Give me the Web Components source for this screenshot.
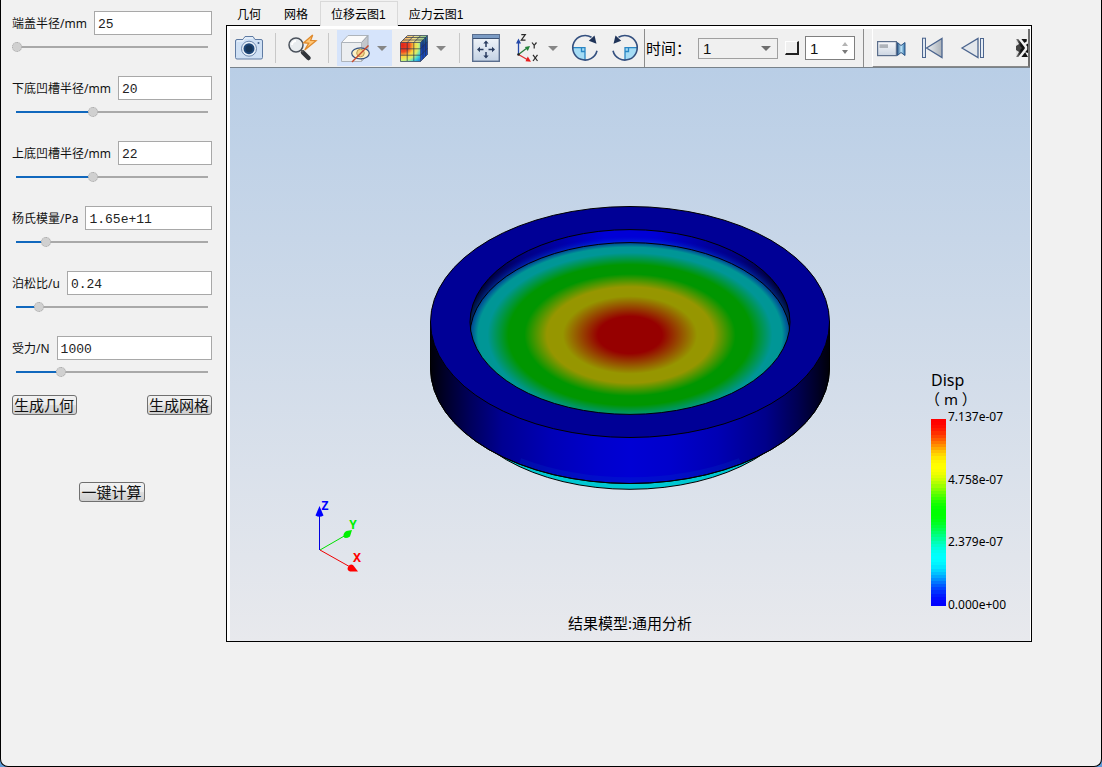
<!DOCTYPE html>
<html lang="zh-CN">
<head>
<meta charset="utf-8">
<title>端盖仿真</title>
<style>
  html { height: 100%; background: #5f9bd8; }
  body { margin: 0; min-height: 100%; display: flex; color: #111; font: 12px/16px "Noto Sans", "Noto Sans CJK SC", sans-serif; }
</style>
</head>
<body>
<app-window></app-window>

<script>
const define = (name, html, setup) => {
  const template = document.createElement('template');
  template.innerHTML = html;
  customElements.define(name, class extends HTMLElement {
    constructor() {
      super();
      this.attachShadow({ mode: 'open' }).append(template.content.cloneNode(true));
    }
    connectedCallback() {
      if (setup) setup(this, this.shadowRoot);
    }
  });
};

/* Labelled text box with a slider under it */
define('param-field', `
  <style>
    :host { display: block; height: 65px; }
    .row { display: flex; align-items: center; gap: 7px; }
    label { white-space: nowrap; padding-top: 2px; }
    .box { flex: 1; min-width: 0; width: 0; height: 24px; box-sizing: border-box; margin: 0; padding: 2px 3px 0;
      border: 1px solid #a8a8a8; background: #fff; color: #222; font: 13px "Liberation Mono", monospace; outline: 0; }
    .slider { -webkit-appearance: none; appearance: none; display: block; width: 100%; height: 10px; margin: 7px 0 0; background: none; outline: 0; }
    .slider::-webkit-slider-runnable-track { height: 10px;
      background: linear-gradient(#1168bd, #1168bd) 4px 50% / calc(var(--value) * 96%) 2px no-repeat,
        linear-gradient(#a9a9a9, #a9a9a9) 50% 50% / calc(100% - 8px) 2px no-repeat; }
    .slider::-webkit-slider-thumb { -webkit-appearance: none; width: 10px; height: 10px; border: 1px dotted #a6a6a6;
      border-radius: 50%; background: #d0d0d0; box-sizing: border-box; }
  </style>
  <div class="row"><label for="box"><slot></slot></label><input id="box" class="box" type="text"></div>
  <input class="slider" type="range" min="0" max="1000">
`, (host, root) => {
  const position = Number(host.getAttribute('position'));
  const slider = root.querySelector('.slider');
  root.querySelector('.box').value = host.getAttribute('value');
  slider.value = position;
  slider.setAttribute('aria-label', host.textContent);
  const paint = () => slider.style.setProperty('--value', slider.value / 1000);
  slider.addEventListener('input', paint);
  paint();
});

define('push-button', `
  <style>
    :host { display: block; }
    button { display: block; height: 20px; margin: 0; padding: 0 2px 0 1px; border: 1px solid #707070; border-radius: 3px; color: #111;
      background: linear-gradient(#f2f2f2, #ebebeb 50%, #dddddd 50%, #cfcfcf);
      font: 15px/18px "Noto Sans CJK SC", sans-serif; white-space: nowrap; }
  </style>
  <button type="button"><slot></slot></button>
`);

define('param-panel', `
  <style>
    :host { display: block; flex: none; width: 200px; padding: 11px 0 0 11px; }
    .pair { display: flex; justify-content: space-between; margin-top: -6px; }
    .run { display: flex; justify-content: center; margin-top: 67px; }
  </style>
  <param-field value="25" position="0">端盖半径/mm</param-field>
  <param-field value="20" position="400">下底凹槽半径/mm</param-field>
  <param-field value="22" position="400">上底凹槽半径/mm</param-field>
  <param-field value="1.65e+11" position="153">杨氏模量/Pa</param-field>
  <param-field value="0.24" position="116">泊松比/u</param-field>
  <param-field value="1000" position="232">受力/N</param-field>
  <div class="pair"><push-button>生成几何</push-button><push-button>生成网格</push-button></div>
  <div class="run"><push-button>一键计算</push-button></div>
`);

define('tab-strip', `
  <style>
    :host { display: flex; height: 25px; padding-top: 1px; box-sizing: border-box; }
    button { margin: 0; padding: 2px 11px 0 10px; border: 1px solid transparent; border-bottom: 0; background: none; color: #000;
      font: 12px/16px "Liberation Sans", "Noto Sans CJK SC", sans-serif; white-space: nowrap; }
    button:first-child { padding-left: 11px; }
    button[aria-selected="true"] { position: relative; border-color: #d9d9d9; background: #f2f2f2; margin-bottom: -1px; padding-bottom: 1px; z-index: 1; }
  </style>
  <button type="button" role="tab" aria-selected="false">几何</button>
  <button type="button" role="tab" aria-selected="false">网格</button>
  <button type="button" role="tab" aria-selected="true">位移云图1</button>
  <button type="button" role="tab" aria-selected="false">应力云图1</button>
`);

/* Icon button; with the "menu" attribute it carries a drop-down arrow */
define('tool-button', `
  <style>
    :host { display: block; flex: none; }
    button { display: flex; align-items: center; gap: 8px; height: 36px; margin: 0; padding: 0; border: 0; background: none; }
    .arrow { display: none; border: 5px solid transparent; border-top-color: #868686; border-bottom: 0; }
    :host([menu]) { margin: 0 -4px; }
    :host([menu]) button { padding: 0 5px 0 4px; }
    :host([menu]) .arrow { display: block; }
    :host([checked]) button { background: #d6e4fb; }
  </style>
  <button type="button"><slot></slot><span class="arrow"></span></button>
`, (host, root) => root.querySelector('button').setAttribute('aria-label', host.getAttribute('label')));

define('view-toolbar', `
  <style>
    :host { display: flex; height: 39px; box-sizing: border-box; background: #f0f0f0; border-bottom: 1px solid #78828a; overflow: hidden; }
    svg { display: block; width: 28px; height: 28px; overflow: visible; }
    .group { display: flex; align-items: center; gap: 12px; }
    .tools { padding: 0 5px; }
    .sep { width: 1px; height: 30px; background: #c8c8c8; }
    .time { gap: 7px; padding: 0 8px 0 1px; border: 1px solid #8c8c8c; border-width: 0 1px; }
    .time label { font: 15px/20px "Noto Sans CJK SC", sans-serif; white-space: nowrap; color: #000; }
    select, .spin { box-sizing: border-box; margin: 0; border: 1px solid #a0a0a0; color: #111; font: 15px "Liberation Sans", sans-serif; outline: 0; border-radius: 0; }
    select { -webkit-appearance: none; appearance: none; width: 80px; height: 21px; padding: 0 4px; background: #f0f0f0; }
    .combo { display: grid; align-items: center; justify-items: end; }
    .combo > * { grid-area: 1 / 1; }
    .combo i { border: 0 solid transparent; pointer-events: none; }
    .down { margin-right: 7px; }
    .combo .down { border-width: 5px 5px 0; border-top-color: #6e6e6e; }
    .key { width: 14px; height: 14px; box-sizing: border-box; margin: 0 -1px 0 0; padding: 0; border: 1px solid #fff; border-right: 2px solid #222; border-bottom: 2px solid #222; background: #f0f0f0; }
    .spin { width: 50px; height: 24px; padding: 0 4px; border-color: #7f7f7f; background: #fff; }
    .arrows { display: grid; gap: 4px; margin-right: 7px; pointer-events: none; }
    .arrows .less { border-width: 4px 3px 0; border-top-color: #7a7a7a; }
    .arrows .greater { border-width: 0 3px 4px; border-bottom-color: #b4b4b4; }
    .play { flex: 1; margin-left: 8px; padding-left: 4px; border-right: 2px solid #6f6f6f; border-bottom: 2px solid #8a8a8a; border-left: 1px solid #fff; margin-bottom: -1px; }
    .more { margin-left: auto; }
    .more svg { width: 12px; overflow: hidden; }
  </style>
  <div class="group tools">
    <tool-button label="截图"><svg viewBox="0 0 28 28">
      <path d="M2 5.5H8L10 2.5H18L20 5.5H26Q27.5 5.5 27.5 7V23.500Q27.500 25 26 25H2Q.5 25 .5 23.500V7Q.5 5.500 2 5.500Z" fill="#cfe0f4" stroke="#5f7ba3"/>
      <path d="M2 7h6l2-3h8" fill="none" stroke="#f3f8fd"/>
      <circle cx="14" cy="14.700" r="7.500" fill="#e9f1fa" stroke="#6c87ad"/><circle cx="14" cy="14.700" r="5.500" fill="#1e4677"/><circle cx="14" cy="14.700" r="3.500" fill="#173659"/>
      <circle cx="23.500" cy="9" r="1" fill="#3f5f8c"/></svg></tool-button>
    <span class="sep"></span>
    <tool-button label="快速查看"><svg viewBox="0 0 28 28">
      <path d="M15 18.500L20.500 24" stroke="#30343a" stroke-width="4.500" stroke-linecap="round"/><path d="M12 15l3 3" stroke="#555" stroke-width="2"/>
      <circle cx="8" cy="11" r="7" fill="#e8ecef" stroke="#4b525c" stroke-width="1.500"/><path d="M4 11a4 4 0 0 1 4-4" stroke="#fff" stroke-width="2" fill="none"/>
      <path d="M24.700 1L15.700 8.700L20.700 9.300L16.700 16L28 6.700L22.700 6.300Z" fill="#ffc878" stroke="#e08a2c" stroke-width="1.300"/></svg></tool-button>
    <span class="sep"></span>
    <tool-button label="显示" menu checked><svg viewBox="0 0 28 28">
      <path d="M.5 8.500L7 1.500H27L20.500 8.500Z" fill="#fafafa" stroke="#aeb4bb"/><path d="M20.500 8.500L27 1.500V20L20.500 27.500Z" fill="#c3c7cc" stroke="#a2a8b0"/>
      <path d="M.5 8.500H20.500V27.500H.5Z" fill="#eceef0" stroke="#aeb4bb"/>
      <ellipse cx="19.500" cy="19.300" rx="8.800" ry="5.500" fill="#fdf0c4" stroke="#345180" stroke-width="1.200"/><circle cx="19.500" cy="19" r="3.800" fill="#f6d588" stroke="#b99a55"/>
      <path d="M11 28L27.500 11.500" stroke="#c74a2f" stroke-width="1.400"/></svg></tool-button>
    <tool-button label="云图" menu><svg viewBox="0 0 28 28">
      <defs><radialGradient id="heat" cx="0.1" cy="0.15" r="1.15"><stop offset="0" stop-color="#e2231a"/><stop offset=".3" stop-color="#ee4a22"/><stop offset=".5" stop-color="#ffd23c"/><stop offset=".68" stop-color="#d8f06a"/><stop offset=".85" stop-color="#3fd6d8"/><stop offset="1" stop-color="#1d8fe0"/></radialGradient>
      <linearGradient id="top"><stop offset="0" stop-color="#f6a04c"/><stop offset=".5" stop-color="#f7e08a"/><stop offset="1" stop-color="#74c48a"/></linearGradient>
      <linearGradient id="side" x2="0" y2="1"><stop offset="0" stop-color="#2f7d8c"/><stop offset=".4" stop-color="#123a9c"/><stop offset="1" stop-color="#1a55d8"/></linearGradient></defs>
      <path d="M.5 8.500L7.500 1.500H27.500L20.500 8.500Z" fill="url(#top)"/><path d="M20.500 8.500L27.500 1.500V20.500L20.500 27.500Z" fill="url(#side)"/><path d="M.5 8.500H20.500V27.500H.5Z" fill="url(#heat)"/>
      <path d="M.5 8.500L7.500 1.500H27.500V20.500L20.500 27.500H.5ZM.5 8.500H20.500V27.500M20.500 8.500L27.500 1.500M7.200 27V8.500L14.200 1.500M13.800 27V8.500L20.800 1.500M.5 14.800H20.500L27.500 7.800M.5 21.200H20.500L27.500 14.200M3 6H23V25M5.500 3.500H25.500V22" fill="none" stroke="#26304e" stroke-opacity=".75" stroke-width=".9"/></svg></tool-button>
    <span class="sep"></span>
    <tool-button label="适应窗口"><svg viewBox="0 0 28 28">
      <defs><linearGradient id="pane" x2="0" y2="1"><stop offset="0" stop-color="#f6f9fc"/><stop offset="1" stop-color="#c3d2e4"/></linearGradient></defs>
      <rect x=".7" y=".7" width="26.600" height="26.600" fill="url(#pane)" stroke="#5a6e8e" stroke-width="1.400"/><path d="M1 2.500H27" stroke="#7b9bc4" stroke-width="3"/><path d="M1 4.500H27" stroke="#3d5375"/>
      <path d="M14 13V9M14 18V22M11.500 15.500H8M16.500 15.500H20" stroke="#2a3d60" stroke-width="1.500"/>
      <path d="M14 6.500L16.700 9.500H11.300ZM14 24.500L11.300 21.500H16.700ZM5 15.500L8 12.800V18.200ZM23 15.500L20 12.800V18.200Z" fill="#2a3d60"/></svg></tool-button>
    <tool-button label="坐标轴" menu><svg viewBox="0 0 28 28">
      <g fill="none" stroke-width="1.300"><path d="M6.500 20.500V7" stroke="#2448a8"/><path d="M6.500 20.500L15 14" stroke="#2c7a3e"/><path d="M6.500 20.500L16 26" stroke="#e03030"/></g>
      <path d="M6.500 4.500L9 9.500H4Z" fill="#2448a8"/><path d="M18 12L15.800 17L12.800 13Z" fill="#23833a"/><path d="M19 27.800L13.500 27.300L15.800 22.500Z" fill="#e81e1e"/><circle cx="6.500" cy="20.500" r="1.300" fill="#222"/>
      <g fill="none" stroke="#2a2a2a" stroke-width="1.200"><path d="M9.300 .6H13.300L9.300 6.200H13.500"/><path d="M20 8.500L22.200 11.300L24.500 8.500M22.200 11.300V14.500"/><path d="M21 20.800L25.500 27M25.500 20.800L21 27"/></g></svg></tool-button>
    <tool-button label="顺时针旋转"><svg viewBox="0 0 28 28">
      <path d="M1.700 13.700H14V26A12.300 12.300 0 0 1 1.700 13.700Z" fill="#a5dcf5"/><path d="M2 13.700H14V26" fill="none" stroke="#2a86c4" stroke-width="1.300"/><path d="M10.500 14v3.500H14" fill="none" stroke="#2a86c4" stroke-width="1.300"/>
      <path d="M26 16.700A12.300 12.300 0 1 1 20.500 3.300" fill="none" stroke="#34507f" stroke-width="1.600"/><path d="M23.500 1.500L17.800 6.800L25.500 9.800Z" fill="#1f3358"/></svg></tool-button>
    <tool-button label="逆时针旋转"><svg viewBox="0 0 28 28"><g transform="matrix(-1 0 0 1 28 0)">
      <path d="M1.700 13.700H14V26A12.300 12.300 0 0 1 1.700 13.700Z" fill="#a5dcf5"/><path d="M2 13.700H14V26" fill="none" stroke="#2a86c4" stroke-width="1.300"/><path d="M10.500 14v3.500H14" fill="none" stroke="#2a86c4" stroke-width="1.300"/>
      <path d="M26 16.700A12.300 12.300 0 1 1 20.500 3.300" fill="none" stroke="#34507f" stroke-width="1.600"/><path d="M23.500 1.500L17.800 6.800L25.500 9.800Z" fill="#1f3358"/></g></svg></tool-button>
  </div>
  <div class="group time">
    <label for="time">时间：</label>
    <span class="combo"><select id="time"><option>1</option></select><i class="down"></i></span>
    <button class="key" type="button" aria-label="选择"></button>
    <span class="combo"><input class="spin" type="text" value="1" aria-label="步"><span class="arrows"><i class="greater"></i><i class="less"></i></span></span>
  </div>
  <div class="group play">
    <tool-button label="录像"><svg viewBox="0 0 28 28">
      <defs><linearGradient id="cam" x2="0" y2="1"><stop offset="0" stop-color="#f8f9fb"/><stop offset="1" stop-color="#ccd6e2"/></linearGradient><linearGradient id="lens"><stop offset="0" stop-color="#2d5c8c"/><stop offset=".5" stop-color="#bfe6fa"/><stop offset="1" stop-color="#2d6ea6"/></linearGradient></defs>
      <rect x=".6" y="7.600" width="18.800" height="14" fill="url(#cam)" stroke="#5c6f8c" stroke-width="1.200"/><rect x="2.500" y="10.300" width="8.500" height="3.700" fill="#aeb3ba"/>
      <path d="M20.500 8.500L24 11.500L28 8.500V21.500L24 18.500L20.500 21.500Z" fill="url(#lens)" stroke="#2f5686"/></svg></tool-button>
    <tool-button label="首帧"><svg viewBox="0 0 28 28">
      <defs><linearGradient id="grey"><stop offset="0" stop-color="#eef1f4"/><stop offset="1" stop-color="#a9b0b8"/></linearGradient></defs>
      <rect x="5.500" y="4.200" width="3" height="19.300" fill="#dfe7f0" stroke="#4c658e"/><path d="M9.500 14L25 4.500V23.500Z" fill="url(#grey)" stroke="#4c658e" stroke-width="1.300"/></svg></tool-button>
    <tool-button label="上一帧"><svg viewBox="0 0 28 28">
      <path d="M5 14L21 4.500V23.500Z" fill="#e3e7ec" stroke="#4c658e" stroke-width="1.300"/><rect x="23.500" y="4.500" width="3" height="19" fill="#e6edf5" stroke="#4c658e"/></svg></tool-button>
    <tool-button class="more" label="更多"><svg viewBox="0 0 12 28">
      <defs><linearGradient id="fade"><stop offset="0" stop-color="#999"/><stop offset=".4" stop-color="#111"/></linearGradient></defs>
      <rect y="5" width="12" height="18" fill="url(#fade)"/><path d="M0 8L6 14L0 20" fill="#444"/>
      <path d="M3 4L10 13V15L3 24M12 5V8L9 10" fill="none" stroke="#f0f0f0" stroke-width="2.500"/><path d="M12 23V19L9 18Z" fill="#f0f0f0"/><path d="M0 5L3 10L0 12ZM0 23L3 18L0 16Z" fill="#e4e4e4"/></svg></tool-button>
  </div>
`);

define('contour-legend', `
  <style>
    :host { display: block; color: #000; }
    .title { font: 16px/17px "Noto Sans", sans-serif; }
    .unit { font: 15px/20px "Noto Sans", "Noto Sans CJK SC", sans-serif; margin-left: -6px; white-space: nowrap; }
    .scale { display: flex; gap: 2px; }
    .bar { width: 15px; margin: 10px 0 7px; }
    .marks { display: flex; flex-direction: column; justify-content: space-between; height: 204px; font: 12px/16px "Noto Sans", sans-serif; }
  </style>
  <div class="title">Disp</div>
  <div class="unit">（ m ）</div>
  <div class="scale">
    <div class="bar"></div>
    <div class="marks"><span>7.137e-07</span><span>4.758e-07</span><span>2.379e-07</span><span>0.000e+00</span></div>
  </div>
`, (host, root) => {
  const nodes = [[255, 0, 0], [255, 255, 0], [0, 255, 0], [0, 255, 255], [0, 0, 255]];
  const bands = 60;
  const stops = [];
  for (let i = 0; i < bands; i++) {
    const t = i / (bands - 1) * 4;
    const k = Math.min(3, Math.floor(t));
    const f = t - k;
    const s = f * f * (3 - 2 * f);
    const rgb = nodes[k].map((c, n) => Math.round(c + (nodes[k + 1][n] - c) * s));
    stops.push(`rgb(${rgb}) ${i / bands * 100}% ${(i + 1) / bands * 100}%`);
  }
  root.querySelector('.bar').style.background = `linear-gradient(${stops.join(',')})`;
});

define('result-view', `
  <style>
    :host { position: relative; flex: 1; min-height: 300px; display: grid; place-items: center; overflow: hidden;
      background: linear-gradient(#b9cee6, #e8e9ed); }
    .model { display: block; width: 402px; height: 298px; }
    .triad { position: absolute; left: 82px; bottom: 67px; width: 52px; height: 76px; }
    contour-legend { position: absolute; right: 20px; bottom: 28px; width: 79px; }
    .caption { position: absolute; inset: auto 0 8px; text-align: center; color: #000; font: 15px/20px "Noto Sans", "Noto Sans CJK SC", sans-serif; }
  </style>
  <svg class="model" viewBox="-201 -116 402 298">
    <defs>
      <linearGradient id="wall"><stop offset="0" stop-color="#000008"/><stop offset=".04" stop-color="#00002c"/><stop offset=".1" stop-color="#00005c"/><stop offset=".18" stop-color="#000092"/><stop offset=".3" stop-color="#0000b6"/><stop offset=".42" stop-color="#0000cc"/><stop offset=".5" stop-color="#0000d4"/><stop offset=".6" stop-color="#0000cc"/><stop offset=".72" stop-color="#0000b4"/><stop offset=".84" stop-color="#00008a"/><stop offset=".92" stop-color="#000052"/><stop offset=".97" stop-color="#000026"/><stop offset="1" stop-color="#000008"/></linearGradient>
      <linearGradient id="inner"><stop offset="0" stop-color="#000008"/><stop offset=".06" stop-color="#000040"/><stop offset=".16" stop-color="#000080"/><stop offset=".3" stop-color="#0000ac"/><stop offset=".42" stop-color="#0000d6"/><stop offset=".58" stop-color="#0000d6"/><stop offset=".7" stop-color="#0000ac"/><stop offset=".84" stop-color="#000080"/><stop offset=".94" stop-color="#000040"/><stop offset="1" stop-color="#000008"/></linearGradient>
      <radialGradient id="disp"><stop offset="0" stop-color="#960000"/><stop offset=".2" stop-color="#960000"/><stop offset=".42" stop-color="#969600"/><stop offset=".52" stop-color="#969600"/><stop offset=".66" stop-color="#009600"/><stop offset=".76" stop-color="#009600"/><stop offset=".89" stop-color="#009696"/><stop offset=".95" stop-color="#009696"/><stop offset="1" stop-color="#004096"/></radialGradient>
      <radialGradient id="glow"><stop offset=".91" stop-color="#0060d8" stop-opacity=".4"/><stop offset=".97" stop-color="#0020d8" stop-opacity="0"/></radialGradient>
      <clipPath id="rim"><ellipse rx="160" ry="92.400"/></clipPath>
    </defs>
    <ellipse cy="66.300" rx="175" ry="101" fill="#00c8d2" stroke="#000"/>
    <path d="M-199.500 0V46A199.500 115.500 0 0 0 199.500 46V0Z" fill="url(#wall)" stroke="#000"/>
    <path d="M-110 139A199.500 115.500 0 0 0 110 139" fill="none" stroke="#0040c8" stroke-opacity=".2" stroke-width="6"/>
    <path d="M-199.500 46A199.500 115.500 0 0 0 199.500 46" fill="none" stroke="#000"/>
    <ellipse rx="199.500" ry="115.500" fill="#000096" stroke="#000"/>
    <ellipse rx="160" ry="92.400" fill="url(#inner)"/>
    <g clip-path="url(#rim)">
      <ellipse cy="13" rx="176" ry="101.600" fill="url(#glow)"/>
      <ellipse cy="13" rx="160" ry="92.400" fill="url(#disp)" stroke="#000"/>
    </g>
    <ellipse rx="160" ry="92.400" fill="none" stroke="#000"/>
  </svg>
  <svg class="triad" viewBox="0 0 52 76">
    <path d="M7.500 52V16" stroke="#0000e0"/><path d="M8 52L34 37" stroke="#00e000"/><path d="M8 52L40 70" stroke="#f00000"/>
    <path d="M7.500 8L11.500 17.500Q7.500 20 3.500 17.500Z" fill="#0000ff"/><path d="M40 32L38 38.500Q33 41.500 31.500 38.500Q31 35 34.500 33Z" fill="#00f000"/><path d="M46 73.500H38Q34.500 72 36 69Q38 65.500 41 67Z" fill="#f00"/>
    <g font-family="Noto Sans, sans-serif" font-weight="700" font-size="12" text-anchor="middle"><text x="13" y="12" fill="#0000ff">Z</text><text x="41" y="31" fill="#00f000">Y</text><text x="45" y="64" fill="#f00">X</text></g>
  </svg>
  <contour-legend></contour-legend>
  <div class="caption">结果模型:通用分析</div>
`);

define('view-frame', `
  <style>
    :host { flex: 1; min-width: 0; display: flex; flex-direction: column; }
    .frame { flex: 1; display: flex; flex-direction: column; border: 1px solid #000; padding: 3px 1px 0 3px; background: #fff; }
  </style>
  <tab-strip></tab-strip>
  <div class="frame"><view-toolbar></view-toolbar><result-view></result-view></div>
`);

define('app-window', `
  <style>
    :host { flex: 1; min-width: 0; display: flex; gap: 14px; box-sizing: border-box; border: 1px solid #000; border-top: 0;
      border-radius: 0 0 8px 8px; background: #f1f1f1; }
    view-frame { margin: 0 69px 124px 0; }
  </style>
  <param-panel></param-panel>
  <view-frame></view-frame>
`);
</script>
</body>
</html>
